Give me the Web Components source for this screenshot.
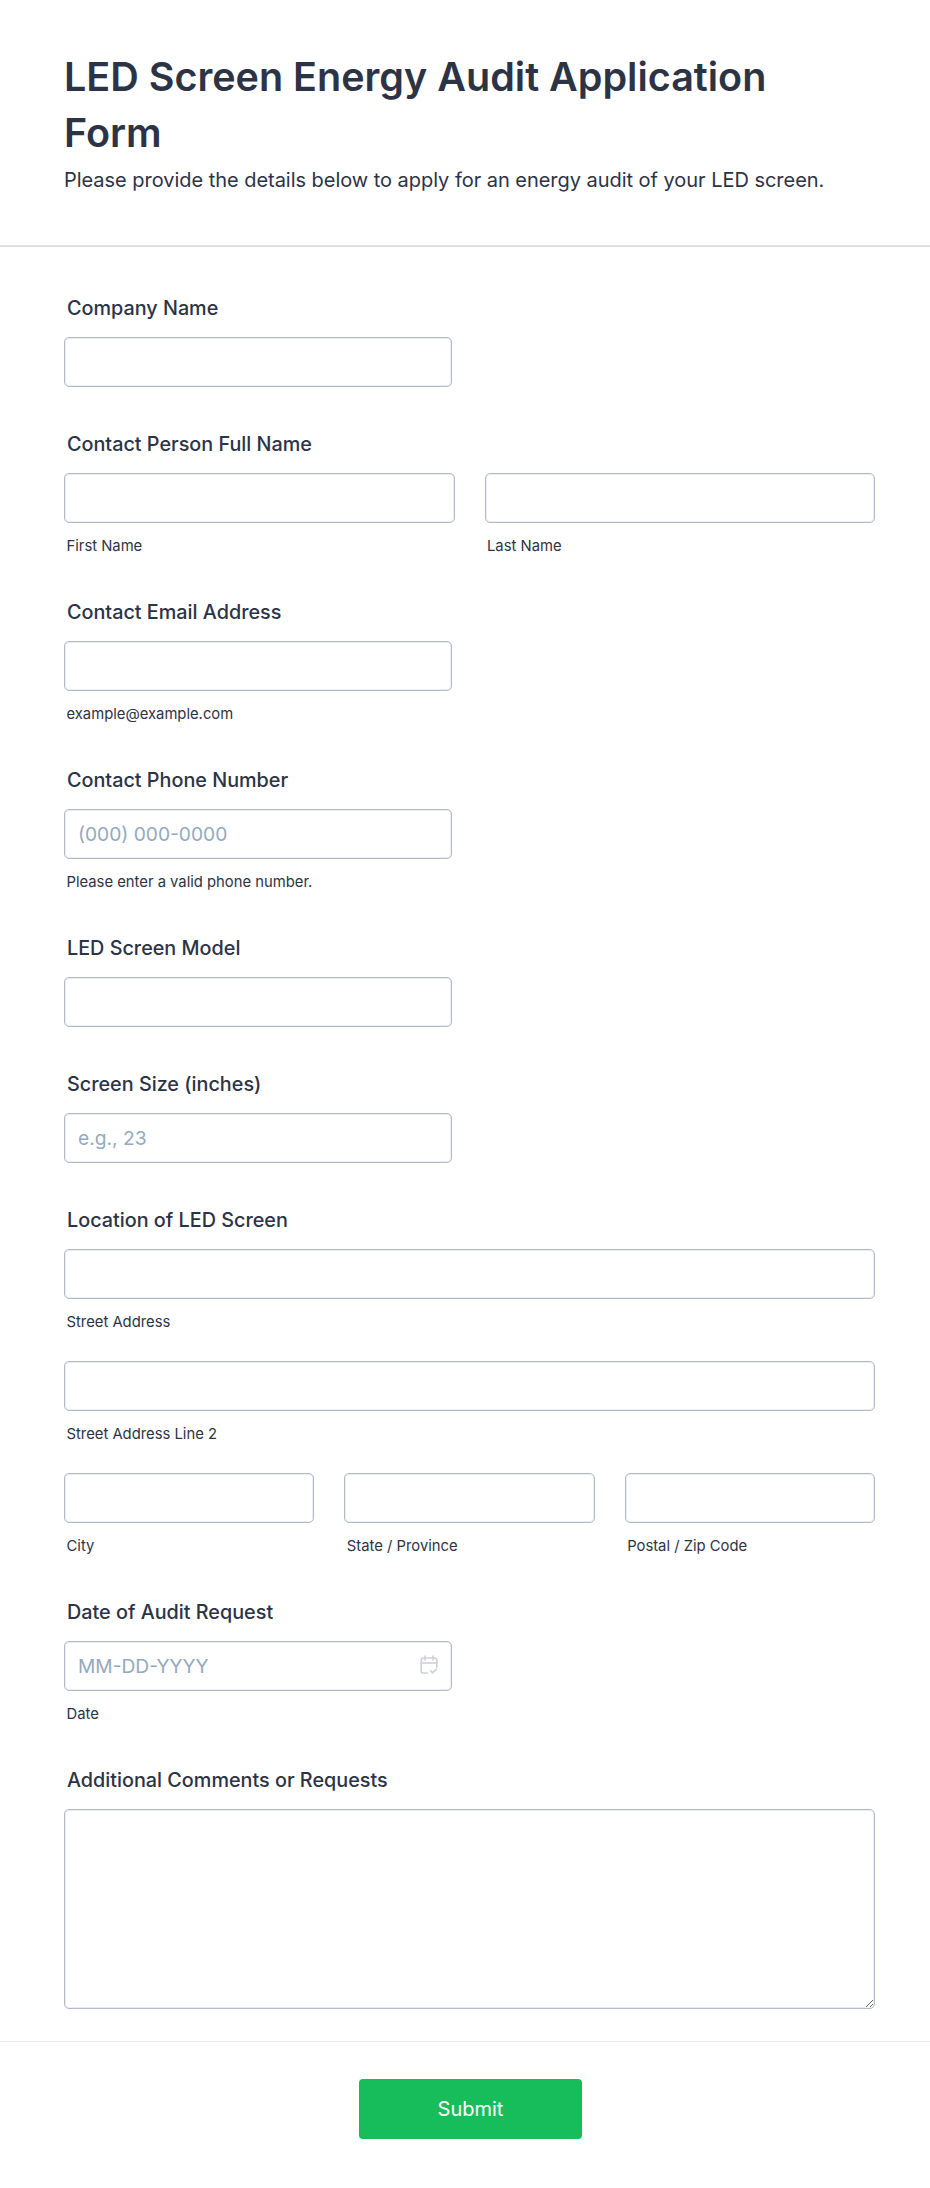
<!DOCTYPE html>
<html lang="en">
<head>
<meta charset="utf-8">
<title>LED Screen Energy Audit Application Form</title>
<style>
  html, body { margin: 0; background: #fff; }
  body { font-family: Inter, "Noto Sans", sans-serif; color: #2c3345; }
</style>
</head>
<body>
<audit-form>
  <form-header slot="header" title="LED Screen Energy Audit Application Form">
    Please provide the details below to apply for an energy audit of your LED screen.
  </form-header>

  <form-field label="Company Name">
    <text-box class="half"></text-box>
  </form-field>

  <form-field label="Contact Person Full Name">
    <field-row columns="2">
      <text-box sublabel="First Name"></text-box>
      <text-box sublabel="Last Name"></text-box>
    </field-row>
  </form-field>

  <form-field label="Contact Email Address">
    <text-box class="half" sublabel="example@example.com"></text-box>
  </form-field>

  <form-field label="Contact Phone Number">
    <text-box class="half" placeholder="(000) 000-0000" sublabel="Please enter a valid phone number."></text-box>
  </form-field>

  <form-field label="LED Screen Model">
    <text-box class="half"></text-box>
  </form-field>

  <form-field label="Screen Size (inches)">
    <text-box class="half" placeholder="e.g., 23"></text-box>
  </form-field>

  <form-field label="Location of LED Screen">
    <text-box sublabel="Street Address"></text-box>
    <text-box sublabel="Street Address Line 2"></text-box>
    <field-row columns="3">
      <text-box sublabel="City"></text-box>
      <text-box sublabel="State / Province"></text-box>
      <text-box sublabel="Postal / Zip Code"></text-box>
    </field-row>
  </form-field>

  <form-field label="Date of Audit Request">
    <text-box class="half" placeholder="MM-DD-YYYY" sublabel="Date" calendar></text-box>
  </form-field>

  <form-field label="Additional Comments or Requests">
    <text-area-box></text-area-box>
  </form-field>

  <form-footer slot="footer">Submit</form-footer>
</audit-form>

<script>
const calendarIcon = `
  <svg class="icon" width="18" height="20" viewBox="0 0 18 20" fill="none" stroke="#cdcfda" stroke-width="1.6" stroke-linecap="round" stroke-linejoin="round">
    <path d="M7.5 18H3.5a2.3 2.3 0 0 1-2.3-2.3V5.3A2.3 2.3 0 0 1 3.5 3h11a2.3 2.3 0 0 1 2.3 2.3v7"/>
    <path d="M1.2 8h15.6M5 1v4M13 1v4"/>
    <path d="M10.5 15.8l2 2 3.8-3.6"/>
  </svg>
`

class AuditForm extends HTMLElement {
  constructor() {
    super()
    this.attachShadow({ mode: 'open' }).innerHTML = `
      <style>
        :host { display: block; width: 930px; }
        .fields { display: flex; flex-direction: column; gap: 46px; padding: 50px 55px 32px 64px; }
      </style>
      <slot name="header"></slot>
      <div class="fields"><slot></slot></div>
      <slot name="footer"></slot>
    `
  }
}

class FormHeader extends HTMLElement {
  constructor() {
    super()
    this.attachShadow({ mode: 'open' }).innerHTML = `
      <style>
        :host { display: block; padding: 49px 64px 50px; border-bottom: 2px solid #dfe0e8; }
        h1 { margin: 0; width: 760px; font-size: 39.5px; line-height: 56px; font-weight: 600; color: #2c3345; }
        p { margin: 4px 0 0; font-size: 20px; line-height: 30px; letter-spacing: -0.035px; color: #2c3345; }
      </style>
      <h1>${this.getAttribute('title')}</h1>
      <p><slot></slot></p>
    `
  }
}

class FormField extends HTMLElement {
  constructor() {
    super()
    this.attachShadow({ mode: 'open' }).innerHTML = `
      <style>
        :host { display: block; }
        label { display: block; padding-left: 3px; margin-bottom: 18px; font-size: 19.8px; line-height: 22px; font-weight: 500; color: #2c3345; }
        .body { display: flex; flex-direction: column; gap: 30px; }
      </style>
      <label>${this.getAttribute('label')}</label>
      <div class="body"><slot></slot></div>
    `
  }
}

class FieldRow extends HTMLElement {
  constructor() {
    super()
    const columns = this.getAttribute('columns')
    this.attachShadow({ mode: 'open' }).innerHTML = `
      <style>
        :host { display: grid; grid-template-columns: repeat(${columns}, 1fr); column-gap: 30px; }
      </style>
      <slot></slot>
    `
  }
}

class TextBox extends HTMLElement {
  constructor() {
    super()
    const placeholder = this.getAttribute('placeholder') || ''
    const sublabel = this.getAttribute('sublabel')
    this.attachShadow({ mode: 'open' }).innerHTML = `
      <style>
        :host { display: block; min-width: 0; }
        :host(.half) { width: 388px; }
        .wrap { position: relative; }
        input {
          display: block; box-sizing: border-box; width: 100%; height: 50px; padding: 0 13px;
          border: 1px solid #b4b8c9; border-radius: 5px; background: #fff; outline: 0;
          box-shadow: inset 0 0 0 1px #ecedf2;
          font: 400 19.2px Inter, sans-serif; color: #2c3345;
        }
        input::placeholder { color: #94a9be; opacity: 1; }
        .icon { position: absolute; top: 14px; right: 14px; }
        small { display: block; padding-left: 2.5px; margin-top: 14px; font-size: 14.8px; line-height: 18px; color: #2c3345; }
      </style>
      <div class="wrap">
        <input type="text" placeholder="${placeholder}">
        ${this.hasAttribute('calendar') ? calendarIcon : ''}
      </div>
      ${sublabel ? `<small>${sublabel}</small>` : ''}
    `
  }
}

class TextAreaBox extends HTMLElement {
  constructor() {
    super()
    this.attachShadow({ mode: 'open' }).innerHTML = `
      <style>
        :host { display: block; }
        textarea {
          display: block; box-sizing: border-box; width: 100%; height: 200px; padding: 10px 13px;
          border: 1px solid #b4b8c9; border-radius: 5px; background: #fff; outline: 0;
          box-shadow: inset 0 0 0 1px #ecedf2;
          font: 400 18px Inter, sans-serif;
        }
      </style>
      <textarea></textarea>
    `
  }
}

class FormFooter extends HTMLElement {
  constructor() {
    super()
    this.attachShadow({ mode: 'open' }).innerHTML = `
      <style>
        :host { display: flex; justify-content: center; padding: 37px 0 49px 11px; border-top: 1px solid #ecedf3; }
        button {
          width: 223px; height: 60px; border: 0; border-radius: 4px; background: #18bd5b; color: #fff;
          font: 400 20px Inter, sans-serif; cursor: pointer;
        }
      </style>
      <button type="button"><slot></slot></button>
    `
  }
}

customElements.define('audit-form', AuditForm)
customElements.define('form-header', FormHeader)
customElements.define('form-field', FormField)
customElements.define('field-row', FieldRow)
customElements.define('text-box', TextBox)
customElements.define('text-area-box', TextAreaBox)
customElements.define('form-footer', FormFooter)
</script>
</body>
</html>
